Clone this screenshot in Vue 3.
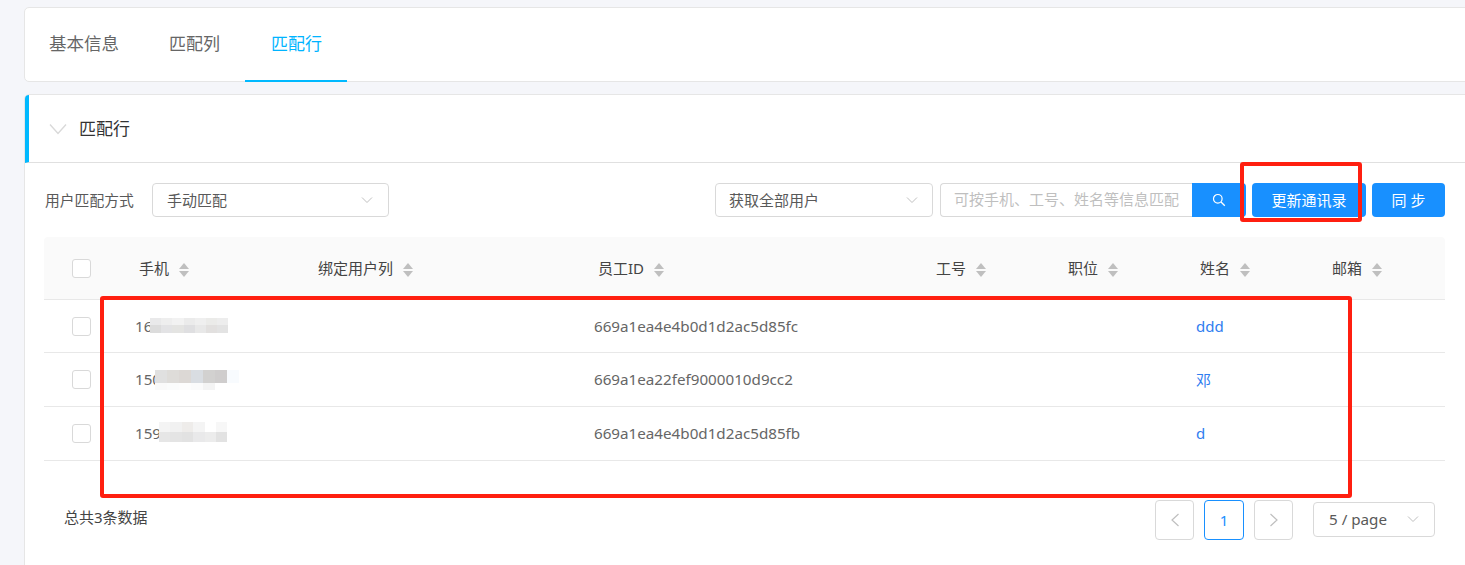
<script setup>
const columns = ['手机', '绑定用户列', '员工ID', '工号', '职位', '姓名', '邮箱']
const rows = [
  {
    phone: '16', id: '669a1ea4e4b0d1d2ac5d85fc', name: 'ddd', blurClass: 'blur-a',
    blur: ['#e9e9ea', '#eeeeee', '#f2f2f2', '#ebebeb', '#efefef', '#ebebe9', '#ededed',
      '#dcdcdc', '#e3e3e5', '#e4e4e2', '#dfdfe1', '#e8e8e8', '#e2e0df', '#e3e3e3'],
  },
  {
    phone: '150', id: '669a1ea22fef9000010d9cc2', name: '邓', blurClass: 'blur-b',
    blur: ['#e0e0e0', '#dedcd9', '#dcd8d5', '#d9dde2', '#d2d1d0', '#cfcdcd', '#f8fbfe',
      '#fafafa', '#fbfcfc', '#fdfdfd', '#fbfbfb', '#f4f4f4', '#ffffff', '#ffffff'],
  },
  {
    phone: '159', id: '669a1ea4e4b0d1d2ac5d85fb', name: 'd', blurClass: 'blur-c',
    blur: ['#f4f4f4', '#f1f1f1', '#eeecea', '#f4f4f4', '#ffffff', '#f7f7f7',
      '#e6e6e6', '#e4e4e4', '#e2e2e2', '#e9e9ea', '#ececec', '#e2e2e2'],
  },
]
</script>

<template>
  <div class="page">
    <div class="card tabs">
      <div class="tab">基本信息</div>
      <div class="tab second">匹配列</div>
      <div class="tab active">匹配行</div>
    </div>

    <div class="card panel">
      <div class="panel-head">
        <svg class="collapse" width="18" height="12" viewBox="0 0 18 12">
          <path d="M1 1.5 9 10.5 17 1.5" fill="none" stroke="#d9d9d9" stroke-width="1.4" />
        </svg>
        <span>匹配行</span>
      </div>

      <div class="panel-body">
        <div class="filters">
          <span class="label">用户匹配方式</span>
          <div class="select mode">
            <span>手动匹配</span>
            <svg width="12" height="8" viewBox="0 0 12 8"><path d="M1 1.5 6 6.5 11 1.5" fill="none" stroke="#bfbfbf" stroke-width="1" /></svg>
          </div>
          <div class="spacer"></div>
          <div class="select scope">
            <span>获取全部用户</span>
            <svg width="12" height="8" viewBox="0 0 12 8"><path d="M1 1.5 6 6.5 11 1.5" fill="none" stroke="#bfbfbf" stroke-width="1" /></svg>
          </div>
          <div class="search">
            <div class="search-input">可按手机、工号、姓名等信息匹配</div>
            <div class="search-btn">
              <svg width="14" height="14" viewBox="0 0 14 14">
                <circle cx="5.8" cy="5.8" r="4.3" fill="none" stroke="#fff" stroke-width="1.2" />
                <path d="M9 9 12.8 12.8" stroke="#fff" stroke-width="1.3" />
              </svg>
            </div>
          </div>
          <button class="btn update">更新通讯录</button>
          <button class="btn sync">同 步</button>
        </div>

        <div class="table">
          <div class="tr head">
            <div class="check-cell"><span class="check"></span></div>
            <div v-for="c in columns" :key="c" class="th">
              <span class="th-text">{{ c }}</span>
              <span class="sorter"><i class="up"></i><i class="down"></i></span>
            </div>
          </div>
          <div v-for="r in rows" :key="r.id" class="tr row">
            <div class="check-cell"><span class="check"></span></div>
            <div class="td phone">
              {{ r.phone }}
              <div class="blur" :class="r.blurClass">
                <i v-for="(b, i) in r.blur" :key="i" :style="{ background: b }"></i>
              </div>
            </div>
            <div class="td"></div>
            <div class="td">{{ r.id }}</div>
            <div class="td"></div>
            <div class="td"></div>
            <div class="td name">{{ r.name }}</div>
            <div class="td"></div>
          </div>
        </div>

        <div class="foot">
          <span class="total">总共3条数据</span>
          <div class="pager">
            <div class="pg">
              <svg width="10" height="14" viewBox="0 0 10 14"><path d="M8.5 1 2 7 8.5 13" fill="none" stroke="#bfbfbf" stroke-width="1.2" /></svg>
            </div>
            <div class="pg current">1</div>
            <div class="pg">
              <svg width="10" height="14" viewBox="0 0 10 14"><path d="M1.5 1 8 7 1.5 13" fill="none" stroke="#bfbfbf" stroke-width="1.2" /></svg>
            </div>
            <div class="select size">
              <span>5 / page</span>
              <svg width="12" height="8" viewBox="0 0 12 8"><path d="M1 1.5 6 6.5 11 1.5" fill="none" stroke="#bfbfbf" stroke-width="1" /></svg>
            </div>
          </div>
        </div>
      </div>
    </div>

    <div class="mark mark-btn"></div>
    <div class="mark mark-rows"></div>
  </div>
</template>

<style>
html, body { margin: 0; background: #f5f6fa; }
</style>

<style scoped>
.page {
  position: relative;
  width: 1465px;
  height: 565px;
  overflow: hidden;
  box-sizing: border-box;
  padding: 7px 0 0 24px;
  background: #f5f6fa;
  font-family: "Noto Sans", "Noto Sans CJK SC", sans-serif;
  color: #595959;
  font-size: 15px;
}
.card {
  box-sizing: border-box;
  width: 1460px;
  background: #fff;
  border: 1px solid #e6e6e6;
  border-radius: 5px;
}
.tabs {
  height: 75px;
  display: flex;
}
.tab {
  height: 74px;
  box-sizing: border-box;
  padding: 0 25px 6px 24px;
  display: flex;
  align-items: center;
  font-size: 17.5px;
  color: #666;
}
.tab.second { padding: 0 25px 6px 25px; font-size: 17px; }
.tab.active {
  color: #00b4ff;
  border-bottom: 2px solid #00b9ff;
  padding: 0 25px 4px 26px;
  font-size: 17px;
}
.panel {
  margin-top: 12px;
  height: 490px;
  overflow: hidden;
}
.panel-head {
  height: 68px;
  box-sizing: border-box;
  border-left: 4px solid #00b9ff;
  border-bottom: 1px solid #e0e0e0;
  display: flex;
  align-items: center;
  padding-left: 20px;
  font-size: 17px;
  color: #333;
}
.panel-head span { padding-bottom: 2px; }
.collapse { margin-right: 12px; }
.panel-body { padding: 20px 0 0 19px; width: 1401px; }
.filters {
  display: flex;
  align-items: center;
  height: 34px;
  padding-left: 1px;
}
.label { width: 107px; color: #595959; font-size: 14.8px; padding-bottom: 2px; }
.select {
  box-sizing: border-box;
  height: 34px;
  border: 1px solid #d9d9d9;
  border-radius: 4px;
  display: flex;
  align-items: center;
  justify-content: space-between;
  background: #fff;
}
.select span { padding-bottom: 2px; }
.mode { width: 237px; padding: 0 15px 0 14px; }
.spacer { flex: 1; }
.scope { width: 218px; padding: 0 14px 0 13px; margin-right: 7px; }
.search { display: flex; height: 34px; margin-right: 6px; }
.search-input {
  box-sizing: border-box;
  width: 252px;
  border: 1px solid #d9d9d9;
  border-right: 0;
  border-radius: 4px 0 0 4px;
  padding-left: 13px;
  line-height: 30px;
  color: #bfbfbf;
  font-size: 15px;
  white-space: nowrap;
  overflow: hidden;
}
.search-btn {
  width: 54px;
  background: #1890ff;
  border-radius: 0 4px 4px 0;
  display: flex;
  align-items: center;
  justify-content: center;
}
.btn {
  height: 34px;
  border: 0;
  background: #1890ff;
  color: #fff;
  border-radius: 4px;
  font: inherit;
  padding: 0 0 2px;
  white-space: pre;
}
.update { width: 114px; margin-right: 6px; }
.sync { width: 73px; }
.table { margin-top: 20px; }
.tr {
  display: grid;
  grid-template-columns: 91px 179px 280px 338px 132px 132px 132px 117px;
  align-items: center;
  border-bottom: 1px solid #e8e8e8;
  box-sizing: border-box;
}
.head {
  height: 63px;
  background: #fafafa;
  border-radius: 4px 4px 0 0;
}
.row { height: 54px; }
.head + .row { height: 53px; }
.check-cell { padding-left: 28px; display: flex; }
.check {
  box-sizing: border-box;
  width: 19px;
  height: 19px;
  background: #fff;
  border: 1px solid #d9d9d9;
  border-radius: 3px;
}
.th {
  padding-left: 4px;
  display: flex;
  align-items: center;
  color: #444;
  font-size: 15px;
  white-space: nowrap;
}
.th-text { padding-bottom: 2px; }
.sorter {
  margin: 4px 0 0 10px;
  display: flex;
  flex-direction: column;
  gap: 2px;
}
.sorter i { display: block; width: 0; height: 0; border-left: 5px solid transparent; border-right: 5px solid transparent; }
.up { border-bottom: 6px solid #bfbfbf; }
.down { border-top: 6px solid #bfbfbf; }
.td { font-size: 15.2px; color: #666; position: relative; white-space: nowrap; padding-bottom: 1px; }
.name { color: #2f7df0; font-size: 15px; }
.blur { position: absolute; display: grid; }
.blur i { display: block; }
.blur-a { left: 15px; top: 2px; grid-template-columns: repeat(7, 11.2px); grid-auto-rows: 7.5px; }
.blur-b { left: 20px; top: 1px; grid-template-columns: repeat(7, 12px); grid-auto-rows: 13px 7px; }
.blur-c { left: 24px; top: -1px; grid-template-columns: repeat(6, 11.4px); grid-auto-rows: 10px; }
.foot {
  display: flex;
  justify-content: space-between;
  margin-top: 39px;
  padding-left: 20px;
}
.total { font-size: 15px; color: #444; margin-top: 7px; line-height: 20px; }
.pager { display: flex; align-items: center; margin-right: 10px; }
.pg {
  box-sizing: border-box;
  width: 39px;
  height: 40px;
  margin-right: 10px;
  border: 1px solid #d9d9d9;
  border-radius: 4px;
  display: flex;
  align-items: center;
  justify-content: center;
  color: #1890ff;
}
.pg.current { border-color: #1890ff; width: 40px; }
.size { width: 122px; height: 35px; margin: 0 0 2px 10px; padding: 0 15px; font-size: 15.2px; }
.size span { padding-bottom: 0; }
.mark {
  position: absolute;
  box-sizing: border-box;
  border: 4px solid #ff1f10;
  border-radius: 3px;
  pointer-events: none;
}
.mark-btn { left: 1240px; top: 162px; width: 122px; height: 60px; }
.mark-rows { left: 100px; top: 296px; width: 1252px; height: 202px; }
</style>
